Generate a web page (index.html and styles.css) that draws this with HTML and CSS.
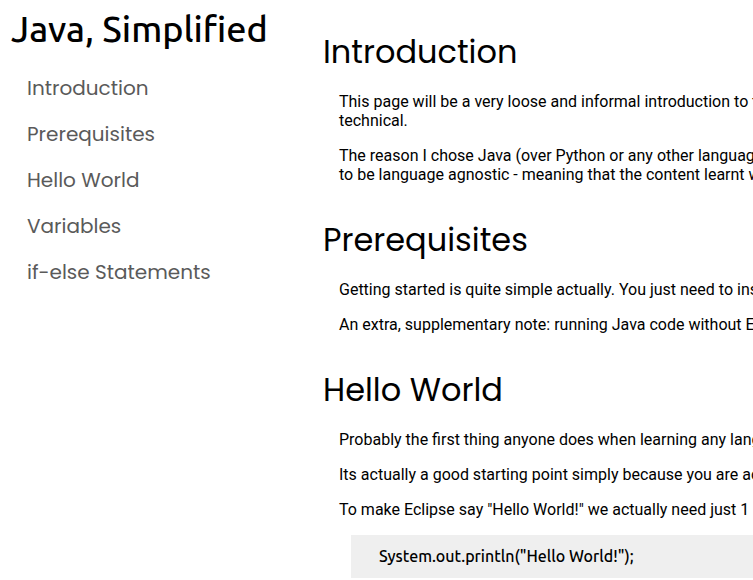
FILE: index.html
```html
<!DOCTYPE html>
<html lang="en">
<head>
<meta charset="utf-8">
<title>Java, Simplified</title>
<link rel="stylesheet" href="styles.css">
</head>
<body>
<div class="page">
  <nav class="sidebar" aria-label="Contents">
    <h1 class="title">Java, Simplified</h1>
    <a class="nav-link" href="#introduction">Introduction</a>
    <a class="nav-link" href="#prerequisites">Prerequisites</a>
    <a class="nav-link" href="#hello-world">Hello World</a>
    <a class="nav-link" href="#variables">Variables</a>
    <a class="nav-link" href="#if-else">if-else Statements</a>
  </nav>
  <main class="content">
    <section class="section" id="introduction">
      <h2 class="heading">Introduction</h2>
      <p>This page will be a very loose and informal introduction to the<br>technical.</p>
      <p>The reason I chose Java (over Python or any other language)<br>to be language agnostic - meaning that the content learnt will</p>
    </section>
    <section class="section" id="prerequisites">
      <h2 class="heading">Prerequisites</h2>
      <p>Getting started is quite simple actually. You just need to install</p>
      <p>An extra, supplementary note: running Java code without Eclipse</p>
    </section>
    <section class="section" id="hello-world">
      <h2 class="heading">Hello World</h2>
      <p>Probably the first thing anyone does when learning any language</p>
      <p>Its actually a good starting point simply because you are actually</p>
      <p>To make Eclipse say "Hello World!" we actually need just 1 line</p>
      <pre class="code"><code>System.out.println("Hello World!");</code></pre>
    </section>
  </main>
</div>
</body>
</html>
```
FILE: styles.css
```css
body {
  margin: 0;
  background: #fff;
  color: #000;
  font: 16px/19px Roboto, sans-serif;
}

.page {
  display: grid;
  grid-template-columns: 300px minmax(0, 1fr);
}

.sidebar {
  display: flex;
  flex-direction: column;
  padding: 5px 11px;
}

.title {
  margin: 0 0 12px;
  font: 500 36px/48px Ubuntu, "Noto Sans", sans-serif;
  white-space: nowrap;
}

.nav-link {
  padding: 8px 16px;
  color: #5a5a5a;
  font: 20px/30px Poppins, Inter, sans-serif;
  text-decoration: none;
}

.content {
  display: flex;
  flex-direction: column;
  gap: 32px;
  padding: 28px 0 0 23px;
  overflow: hidden;
  white-space: nowrap;
}

.section {
  display: flex;
  flex-direction: column;
  gap: 16px;
}

.heading {
  margin: 0;
  font: 400 32px/48px Poppins, Inter, sans-serif;
}

.section p {
  margin: 0 0 0 16px;
}

.code {
  margin: 0 0 0 28px;
  padding: 12px 28px;
  background: #efefef;
}

.code code {
  font: 500 16px/19px Ubuntu, "Noto Sans", sans-serif;
}
```
